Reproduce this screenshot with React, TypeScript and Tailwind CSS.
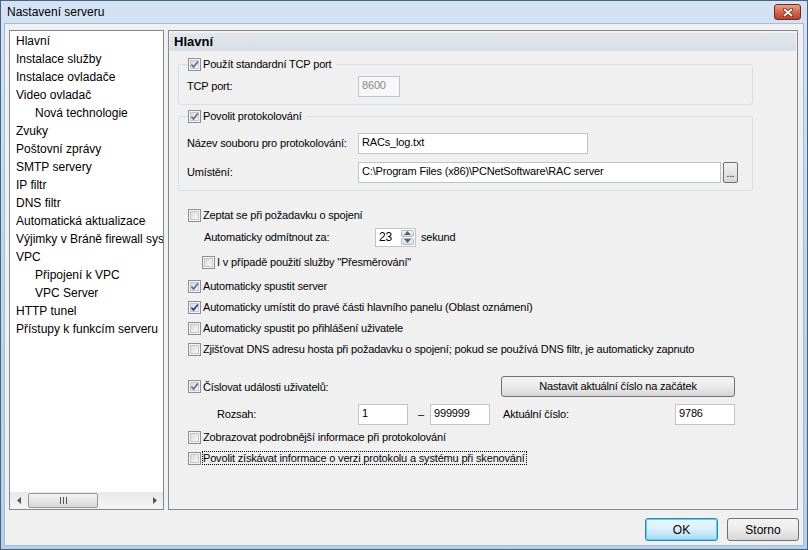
import React from "react";

const font = { fontFamily: '"Liberation Sans", Arial, sans-serif' };

const treeItems: [string, number][] = [
  ["Hlavní", 0],
  ["Instalace služby", 0],
  ["Instalace ovladače", 0],
  ["Video ovladač", 0],
  ["Nová technologie", 1],
  ["Zvuky", 0],
  ["Poštovní zprávy", 0],
  ["SMTP servery", 0],
  ["IP filtr", 0],
  ["DNS filtr", 0],
  ["Automatická aktualizace", 0],
  ["Výjimky v Bráně firewall systému", 0],
  ["VPC", 0],
  ["Připojení k VPC", 1],
  ["VPC Server", 1],
  ["HTTP tunel", 0],
  ["Přístupy k funkcím serveru", 0],
];

function Check({ checked, strong }: { checked?: boolean; strong?: boolean }) {
  return (
    <span className="flex w-[13px] h-[13px] shrink-0 border border-[#8f8f8f] bg-[#f4f4f4] p-[1px]">
      <span className="relative flex-1 border border-[#c3c8cf] bg-gradient-to-br from-[#d6dadf] to-[#f8f8f9]">
        {checked && (
          <svg viewBox="0 0 9 9" className="absolute -left-[1px] -top-[1px] w-[9px] h-[9px]">
            <path
              d="M1.4 4.6 L3.6 7 L7.9 1.4"
              fill="none"
              stroke={strong ? "#1f3f9c" : "#5b6d93"}
              strokeWidth="1.7"
            />
          </svg>
        )}
      </span>
    </span>
  );
}

function CheckRow({
  label,
  checked,
  strong,
  focus,
  className = "",
}: {
  label: string;
  checked?: boolean;
  strong?: boolean;
  focus?: boolean;
  className?: string;
}) {
  return (
    <div className={`flex items-center h-[14px] ${focus ? "gap-[1px]" : "gap-[2px]"} ${className}`}>
      <Check checked={checked} strong={strong} />
      <span
        className={`whitespace-nowrap leading-[12px] ${focus ? "border border-dotted border-black pr-[1px]" : ""}`}
      >
        {label}
      </span>
    </div>
  );
}

function TextBox({
  value,
  w,
  disabled,
}: {
  value: string;
  w: string;
  disabled?: boolean;
}) {
  return (
    <div
      className={`${w} h-[21px] shrink-0 border border-[#bfc3ca] flex items-center pl-[3px] pb-[2px] whitespace-nowrap overflow-hidden ${
        disabled ? "bg-[#f7f7f7] text-[#8a8a8a]" : "bg-white text-black"
      }`}
    >
      {value}
    </div>
  );
}

function Button({ label, w }: { label: string; w: string }) {
  return (
    <div
      className={`${w} h-[21px] shrink-0 rounded-[3px] border border-[#707070] bg-gradient-to-b from-[#f3f3f3] via-[#ebebeb] to-[#d6d6d6] flex items-center justify-center`}
    >
      {label}
    </div>
  );
}

function Spinner({ value }: { value: string }) {
  return (
    <div className="w-[41px] h-[19px] shrink-0 border border-[#bfc3ca] bg-white flex">
      <div className="flex-1 pl-[3px] flex items-center text-[12px]">{value}</div>
      <div className="w-[15px] flex flex-col gap-[1px] p-[1px]">
        <div className="flex-1 rounded-[2px] border border-[#b5b8bd] bg-gradient-to-b from-[#f5f5f5] to-[#dcdcdc] flex items-center justify-center">
          <svg viewBox="0 0 7 4" className="w-[7px] h-[4px]">
            <path d="M0 4 L3.5 0 L7 4 Z" fill="#4d6185" />
          </svg>
        </div>
        <div className="flex-1 rounded-[2px] border border-[#b5b8bd] bg-gradient-to-b from-[#f5f5f5] to-[#dcdcdc] flex items-center justify-center">
          <svg viewBox="0 0 7 4" className="w-[7px] h-[4px]">
            <path d="M0 0 L3.5 4 L7 0 Z" fill="#4d6185" />
          </svg>
        </div>
      </div>
    </div>
  );
}

function TreeList() {
  return (
    <div className="w-[155px] h-[480px] shrink-0 border border-[#828790] bg-white flex flex-col text-[12px]">
      <div className="flex-1 pt-[1px] overflow-hidden">
        {treeItems.map(([label, level]) => (
          <div
            key={label}
            className={`h-[18px] leading-[18px] whitespace-nowrap ${level ? "pl-[25px]" : "pl-[6px]"}`}
          >
            {label}
          </div>
        ))}
      </div>
      <div className="h-[17px] bg-gradient-to-b from-[#e9e9e9] to-[#f5f5f5] flex items-center">
        <div className="w-[17px] flex justify-center">
          <svg viewBox="0 0 4 7" className="w-[4px] h-[7px]">
            <path d="M4 0 L0 3.5 L4 7 Z" fill="#555" />
          </svg>
        </div>
        <div className="ml-[1px] w-[70px] h-[15px] rounded-[2px] border border-[#979797] bg-gradient-to-b from-[#f3f3f3] to-[#d8d8d8] flex items-center justify-center gap-[2px]">
          <span className="w-[1px] h-[7px] bg-[#555]" />
          <span className="w-[1px] h-[7px] bg-[#555]" />
          <span className="w-[1px] h-[7px] bg-[#555]" />
        </div>
        <div className="flex-1" />
        <div className="w-[17px] flex justify-center">
          <svg viewBox="0 0 4 7" className="w-[4px] h-[7px]">
            <path d="M0 0 L4 3.5 L0 7 Z" fill="#555" />
          </svg>
        </div>
      </div>
    </div>
  );
}

function Group({
  label,
  className = "",
  children,
}: {
  label: string;
  className?: string;
  children: React.ReactNode;
}) {
  return (
    <div className={`relative ml-[9px] w-[575px] rounded-[3px] border border-[#d5dfe5] ${className}`}>
      <div className="absolute left-[9px] -top-[8px] bg-[#f0f0f0] pr-[5px]">
        <CheckRow label={label} checked />
      </div>
      {children}
    </div>
  );
}

function MainPanel() {
  return (
    <div className="ml-[4px] w-[630px] h-[480px] border border-[#828790] bg-[#f0f0f0] flex flex-col text-[11px] tracking-[-0.17px]">
      <div className="mt-[2px] mx-[1px] h-[18px] bg-gradient-to-b from-[#e3e7ec] to-[#d9dee5] pl-[4px] leading-[18px] text-[13px] font-bold tracking-normal">
        Hlavní
      </div>

      <Group label="Použít standardní TCP port" className="mt-[13px]">
        <div className="flex items-center pt-[11px] pb-[7px] pl-[8px]">
          <span className="w-[171px]">TCP port:</span>
          <TextBox value="8600" w="w-[42px]" disabled />
        </div>
      </Group>

      <Group label="Povolit protokolování" className="mt-[11px]">
        <div className="flex flex-col gap-[8px] pt-[16px] pb-[7px] pl-[8px]">
          <div className="flex items-center">
            <span className="w-[171px]">Název souboru pro protokolování:</span>
            <TextBox value="RACs_log.txt" w="w-[230px]" />
          </div>
          <div className="flex items-center">
            <span className="w-[171px]">Umístění:</span>
            <TextBox value="C:\Program Files (x86)\PCNetSoftware\RAC server" w="w-[363px]" />
            <div className="ml-[2px] w-[15px] h-[21px] rounded-[2px] border border-[#707070] bg-gradient-to-b from-[#f3f3f3] to-[#d6d6d6] flex items-end justify-center pb-[3px] text-[10px] leading-none">
              ...
            </div>
          </div>
        </div>
      </Group>

      <CheckRow label="Zeptat se při požadavku o spojení" className="mt-[17px] ml-[19px]" />
      <div className="mt-[5px] ml-[35px] h-[20px] flex items-center">
        <span className="w-[171px]">Automaticky odmítnout za:</span>
        <Spinner value="23" />
        <span className="ml-[5px]">sekund</span>
      </div>
      <CheckRow label="I v případě použití služby &quot;Přesměrování&quot;" className="mt-[8px] ml-[33px]" />

      <CheckRow label="Automaticky spustit server" checked className="mt-[10px] ml-[19px]" />
      <CheckRow
        label="Automaticky umístit do pravé části hlavního panelu (Oblast oznámení)"
        checked
        strong
        className="mt-[7px] ml-[19px]"
      />
      <CheckRow label="Automaticky spustit po přihlášení uživatele" className="mt-[7px] ml-[19px]" />
      <CheckRow
        label="Zjišťovat DNS adresu hosta při požadavku o spojení; pokud se používá DNS filtr, je automaticky zapnuto"
        className="mt-[7px] ml-[19px]"
      />

      <div className="mt-[20px] ml-[19px] h-[21px] flex items-center">
        <div className="w-[313px]">
          <CheckRow label="Číslovat události uživatelů:" checked />
        </div>
        <Button label="Nastavit aktuální číslo na začátek" w="w-[234px]" />
      </div>
      <div className="mt-[7px] ml-[48px] h-[21px] flex items-center">
        <span className="w-[141px]">Rozsah:</span>
        <TextBox value="1" w="w-[50px]" />
        <span className="w-[22px] pl-[10px]">–</span>
        <TextBox value="999999" w="w-[60px]" />
        <span className="ml-[13px] w-[172px]">Aktuální číslo:</span>
        <TextBox value="9786" w="w-[60px]" />
      </div>
      <CheckRow label="Zobrazovat podrobnější informace při protokolování" className="mt-[5px] ml-[19px]" />
      <CheckRow
        label="Povolit získávat informace o verzi protokolu a systému při skenování"
        focus
        className="mt-[7px] ml-[19px]"
      />
    </div>
  );
}

export default function App() {
  return (
    <div
      style={font}
      className="w-[808px] h-[550px] border border-[#4a6383] bg-gradient-to-b from-[#d3e3f4] via-[#bfd5ed] to-[#b6cfea] flex flex-col text-black"
    >
      <div className="h-[22px] flex items-center pl-[6px] pr-[6px]">
        <span className="text-[12px]">Nastavení serveru</span>
        <div className="flex-1" />
        <div className="w-[27px] h-[16px] rounded-[3px] border border-[#6b2b1f] bg-gradient-to-b from-[#eaa18d] via-[#d6654b] to-[#c23d24] flex items-center justify-center">
          <svg viewBox="0 0 10 9" className="w-[10px] h-[9px]">
            <path d="M1.5 1.5 L8.5 7.5 M8.5 1.5 L1.5 7.5" stroke="#5b2218" strokeWidth="3.2" strokeLinecap="round" />
            <path d="M1.5 1.5 L8.5 7.5 M8.5 1.5 L1.5 7.5" stroke="#ffffff" strokeWidth="1.8" strokeLinecap="round" />
          </svg>
        </div>
      </div>
      <div className="mx-[3px] mb-[3px] flex-1 bg-[#f0f0f0] border border-[#a6bcd6] flex flex-col">
        <div className="flex pt-[6px] pl-[4px]">
          <TreeList />
          <MainPanel />
        </div>
        <div className="mt-[8px] flex justify-end gap-[9px] pr-[4px]">
          <div className="w-[73px] h-[23px] rounded-[3px] border border-[#3c7fb1] bg-gradient-to-b from-[#eaf6fd] via-[#d9f0fc] to-[#a7d9f5] flex items-center justify-center text-[12px] shadow-[inset_0_0_0_1px_#48d8fb]">
            OK
          </div>
          <div className="w-[72px] h-[23px] rounded-[3px] border border-[#707070] bg-gradient-to-b from-[#f3f3f3] via-[#ebebeb] to-[#d6d6d6] flex items-center justify-center text-[12px]">
            Storno
          </div>
        </div>
      </div>
    </div>
  );
}
